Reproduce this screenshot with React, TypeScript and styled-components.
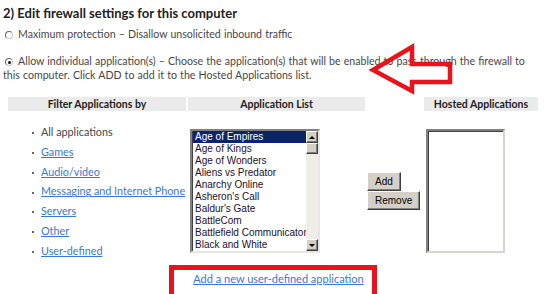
import styled, { createGlobalStyle } from "styled-components";

const GlobalStyle = createGlobalStyle`
  html, body {
    margin: 0;
    padding: 0;
    background: #fff;
  }
  body {
    font-family: Lato, "Open Sans", sans-serif;
  }
`;

const filters = [
  { label: "All applications", link: false },
  { label: "Games", link: true },
  { label: "Audio/video", link: true },
  { label: "Messaging and Internet Phone", link: true },
  { label: "Servers", link: true },
  { label: "Other", link: true },
  { label: "User-defined", link: true },
];

const apps = [
  "Age of Empires",
  "Age of Kings",
  "Age of Wonders",
  "Aliens vs Predator",
  "Anarchy Online",
  "Asheron's Call",
  "Baldur's Gate",
  "BattleCom",
  "Battlefield Communicator",
  "Black and White",
];

export default function App() {
  return (
    <>
      <GlobalStyle />
      <Page>
        <Title>2) Edit firewall settings for this computer</Title>
        <Option $gap={5}>
          <Radio />
          Maximum protection – Disallow unsolicited inbound traffic
        </Option>
        <Option $gap={13}>
          <Radio $checked />
          Allow individual application(s) – Choose the application(s) that will be enabled to pass through the firewall to
          this computer. Click ADD to add it to the Hosted Applications list.
        </Option>

        <Grid>
          <HeadCell>Filter Applications by</HeadCell>
          <HeadCell>Application List</HeadCell>
          <div />
          <HeadCell>Hosted Applications</HeadCell>

          <FilterList>
            {filters.map((f) => (
              <FilterItem key={f.label}>
                {f.link ? <Link href="#">{f.label}</Link> : f.label}
              </FilterItem>
            ))}
          </FilterList>

          <ListBox>
            <Items>
              {apps.map((a, i) => (
                <Item key={a} $selected={i === 0}>
                  {a}
                </Item>
              ))}
            </Items>
            <ScrollBar>
              <ScrollButton>
                <Tri $up />
              </ScrollButton>
              <Thumb />
              <Track />
              <ScrollButton>
                <Tri />
              </ScrollButton>
            </ScrollBar>
          </ListBox>

          <ButtonStack>
            <WinButton>Add</WinButton>
            <WinButton>Remove</WinButton>
          </ButtonStack>

          <HostedBox />
        </Grid>

        <Footer>
          <Callout>
            <Link href="#">Add a new user-defined application</Link>
          </Callout>
        </Footer>

        <Arrow width="90" height="56" viewBox="368 42 90 56">
          <polygon
            points="373,70 412,47 412,64 450,64 450,82 412,82 412,91"
            fill="none"
            stroke="#e8131c"
            strokeWidth="4.5"
            strokeLinejoin="miter"
          />
        </Arrow>
      </Page>
    </>
  );
}

const Page = styled.div`
  position: relative;
  width: 546px;
  height: 294px;
  overflow: hidden;
  color: #474747;
  font-size: 10.6px;
`;

const Title = styled.h2`
  margin: 0;
  padding: 4px 3px 0;
  font-size: 13px;
  line-height: 18px;
  font-weight: 700;
  color: #222;
`;

const Option = styled.p<{ $gap: number }>`
  margin: ${(p) => p.$gap}px 0 0;
  padding: 0 20px 0 3px;
  line-height: 14px;
  word-spacing: 0.4px;
`;

const Radio = styled.span<{ $checked?: boolean }>`
  display: inline-block;
  position: relative;
  box-sizing: border-box;
  width: 8px;
  height: 8px;
  margin: 0 5px 0 2px;
  vertical-align: -1px;
  border-radius: 50%;
  border: 1px solid;
  border-color: #666 #c8c8c8 #c8c8c8 #666;
  background: #fff;

  &::after {
    content: "";
    display: ${(p) => (p.$checked ? "block" : "none")};
    position: absolute;
    left: 1.5px;
    top: 1.5px;
    width: 3px;
    height: 3px;
    border-radius: 50%;
    background: #111;
  }
`;

const Grid = styled.div`
  display: grid;
  grid-template-columns: 178px 177px 55px 114px;
  gap: 11px 2px;
  align-items: center;
  margin: 15px 0 0 8px;
`;

const HeadCell = styled.div`
  align-self: start;
  background: #ebebeb;
  font-weight: 700;
  font-size: 10.5px;
  line-height: 14px;
  color: #222;
  text-align: center;
  white-space: nowrap;
`;

const FilterList = styled.ul`
  list-style: none;
  margin: 0;
  padding: 0;
  font-size: 10.8px;
`;

const FilterItem = styled.li`
  padding-left: 24px;
  line-height: 19.8px;
  white-space: nowrap;

  &::before {
    content: "";
    display: inline-block;
    width: 2px;
    height: 2px;
    margin-right: 7px;
    vertical-align: middle;
    background: #666;
  }
`;

const Link = styled.a`
  color: #3a78d4;
  text-decoration: underline;
`;

const ListBox = styled.div`
  display: flex;
  box-sizing: border-box;
  width: 130px;
  height: 124px;
  margin-left: 2px;
  border: 2px solid;
  border-color: #808080 #e8e6e0 #e8e6e0 #808080;
  box-shadow: inset 1px 1px 0 #404040;
  background: #fff;
  font-family: "Liberation Sans", Arial, sans-serif;
  font-size: 10px;
`;

const Items = styled.div`
  flex: 1;
  padding-left: 1px;
  overflow: hidden;
`;

const Item = styled.div<{ $selected?: boolean }>`
  padding-left: 2px;
  line-height: 12px;
  white-space: nowrap;
  color: ${(p) => (p.$selected ? "#fff" : "#1d1028")};
  background: ${(p) => (p.$selected ? "#0a246a" : "transparent")};
`;

const ScrollBar = styled.div`
  display: flex;
  flex-direction: column;
  width: 12px;
  background: #eeede8;
`;

const ScrollButton = styled.div`
  display: flex;
  align-items: center;
  justify-content: center;
  box-sizing: border-box;
  height: 12px;
  background: #d4d0c8;
  border: 1px solid;
  border-color: #fff #404040 #404040 #fff;
  box-shadow: inset -1px -1px 0 #808080;
`;

const Tri = styled.span<{ $up?: boolean }>`
  width: 0;
  height: 0;
  border-left: 3px solid transparent;
  border-right: 3px solid transparent;
  ${(p) => (p.$up ? "border-bottom: 3px solid #000;" : "border-top: 3px solid #000;")}
`;

const Thumb = styled(ScrollButton)`
  height: 11px;
`;

const Track = styled.div`
  flex: 1;
`;

const ButtonStack = styled.div`
  display: flex;
  flex-direction: column;
  align-items: flex-start;
`;

const WinButton = styled.button`
  box-sizing: border-box;
  height: 19px;
  padding: 0 7px 1px;
  margin: 0;
  font-family: "Liberation Sans", Arial, sans-serif;
  font-size: 10px;
  color: #000;
  background: #d4d0c8;
  border: 1px solid;
  border-color: #fff #404040 #404040 #fff;
  box-shadow: inset -1px -1px 0 #808080;
  border-radius: 0;
`;

const HostedBox = styled.div`
  box-sizing: border-box;
  width: 79px;
  height: 124px;
  margin-left: 2px;
  border: 2px solid;
  border-color: #808080 #d8d5cd #d8d5cd #808080;
  box-shadow: inset 1px 1px 0 #404040;
  background: #fff;
`;

const Footer = styled.div`
  display: flex;
  justify-content: center;
  margin-top: 4px;
`;

const Callout = styled.div`
  border: 5px solid #e8131c;
  padding: 2px 8px 12px 19px;
  line-height: 14px;
  font-size: 11px;
  white-space: nowrap;
`;

const Arrow = styled.svg`
  position: absolute;
  left: 368px;
  top: 42px;
  overflow: visible;
`;
